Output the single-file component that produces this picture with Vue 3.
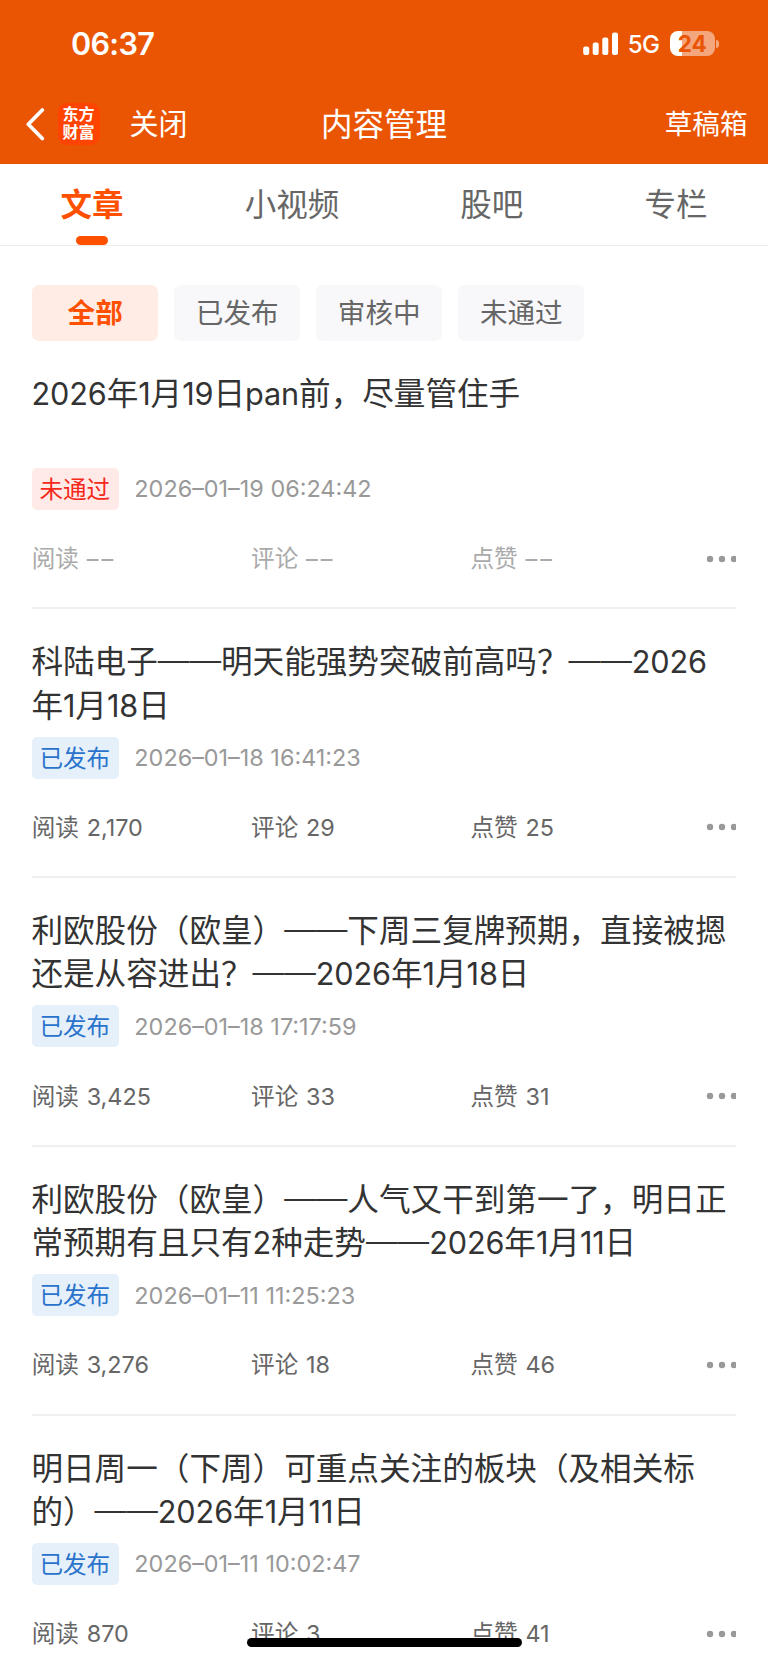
<script setup>
const tabs = ['文章', '小视频', '股吧', '专栏']
const filters = ['全部', '已发布', '审核中', '未通过']

const articles = [
  {
    lines: ['2026年1月19日pan前，尽量管住手'],
    status: '未通过', rejected: true, time: '2026–01–19 06:24:42',
    stats: ['––', '––', '––'],
  },
  {
    lines: ['科陆电子——明天能强势突破前高吗？——2026', '年1月18日'],
    status: '已发布', time: '2026–01–18 16:41:23',
    stats: ['2,170', '29', '25'],
  },
  {
    lines: ['利欧股份（欧皇）——下周三复牌预期，直接被摁', '还是从容进出？——2026年1月18日'],
    status: '已发布', time: '2026–01–18 17:17:59',
    stats: ['3,425', '33', '31'],
  },
  {
    lines: ['利欧股份（欧皇）——人气又干到第一了，明日正', '常预期有且只有2种走势——2026年1月11日'],
    status: '已发布', time: '2026–01–11 11:25:23',
    stats: ['3,276', '18', '46'],
  },
  {
    lines: ['明日周一（下周）可重点关注的板块（及相关标', '的）——2026年1月11日'],
    status: '已发布', time: '2026–01–11 10:02:47',
    stats: ['870', '3', '41'],
  },
]
const labels = ['阅读', '评论', '点赞']

// Latin letters, digits and long dashes are set in their own faces, apart from the Chinese runs.
const runs = (s) =>
  s.match(/[A-Za-z0-9]+|—+|[^A-Za-z0-9—]+/g).map((t) => ({
    t,
    latin: /^[A-Za-z0-9]/.test(t),
    dash: t[0] === '—',
  }))
</script>

<template>
  <div class="page" lang="zh-CN">
    <header class="top">
      <div class="status">
        <span class="clock">06:37</span>
        <div class="signals">
          <svg class="bars" width="36" height="24" viewBox="0 0 36 24" fill="#fff">
            <rect x="0.2" y="14.5" width="6" height="8.5" rx="2" />
            <rect x="9.7" y="10.5" width="6" height="12.5" rx="2" />
            <rect x="19.3" y="5.5" width="6" height="17.5" rx="2" />
            <rect x="29" y="0.5" width="6" height="22.5" rx="2" />
          </svg>
          <span class="net">5G</span>
          <div class="battery"><span>24</span></div>
          <i class="nub"></i>
        </div>
      </div>
      <nav class="nav">
        <div class="left">
          <svg width="20" height="34" viewBox="0 0 20 34" fill="none" stroke="#fff" stroke-width="3.7" stroke-linecap="round" stroke-linejoin="round">
            <path d="M16.3 3 2.3 17.3 16.3 31.5" />
          </svg>
          <div class="logo">东方<br>财富</div>
          <span class="close">关闭</span>
        </div>
        <h1>内容管理</h1>
        <span class="drafts">草稿箱</span>
      </nav>
    </header>

    <div class="tabs">
      <div v-for="(t, i) in tabs" :key="t" class="tab" :class="{ on: i === 0 }">{{ t }}</div>
    </div>

    <div class="filters">
      <div v-for="(f, i) in filters" :key="f" class="chip" :class="{ on: i === 0 }">{{ f }}</div>
    </div>

    <main>
      <article v-for="a in articles" :key="a.time">
        <h2>
          <span v-for="l in a.lines" :key="l" class="line"><span v-for="(r, i) in runs(l)" :key="i" :class="{ latin: r.latin, dash: r.dash }">{{ r.t }}</span></span>
        </h2>
        <div class="meta">
          <span class="tag" :class="{ bad: a.rejected }">{{ a.status }}</span>
          <time>{{ a.time }}</time>
        </div>
        <div class="stats" :class="{ dim: a.rejected }">
          <div v-for="(s, i) in a.stats" :key="i" class="stat">{{ labels[i] }}<b>{{ s }}</b></div>
          <svg class="more" width="30" height="8" viewBox="0 0 30 8" fill="#999">
            <circle cx="4" cy="4" r="3.2" /><circle cx="16" cy="4" r="3.2" /><circle cx="28" cy="4" r="3.2" />
          </svg>
        </div>
      </article>
    </main>
    <div class="home"></div>
  </div>
</template>

<style>
body { background: #fff; }
</style>

<style scoped>
.page {
  position: relative;
  width: 768px;
  height: 1662px;
  overflow: hidden;
  background: #fff;
  font-family: "Noto Sans CJK SC", sans-serif;
  text-spacing-trim: space-all;
  color: #333;
  white-space: nowrap;
}
.top { height: 163.5px; background: #ea5504; color: #fff; }
.status {
  height: 84px;
  box-sizing: border-box;
  padding: 3px 49px 0 71px;
  display: flex;
  align-items: center;
  justify-content: space-between;
  font-family: Inter, sans-serif;
}
.clock { font-size: 30.6px; font-weight: 600; letter-spacing: -0.7px; }
.signals { display: flex; align-items: center; }
.net { font-size: 24px; font-weight: 500; letter-spacing: -0.5px; margin: 1px 10px 0 9px; }
.battery {
  width: 45.5px;
  height: 25px;
  border-radius: 8px;
  background: linear-gradient(90deg, #fff 11.5px, #f4a67d 11.5px);
  color: #ea5504;
  font-size: 22.5px;
  font-weight: 700;
  line-height: 25px;
  text-align: center;
}
.nub { width: 3px; height: 8px; margin-left: 1px; border-radius: 0 4px 4px 0; background: #f4a67d; }
.nav {
  height: 79px;
  display: grid;
  grid-template-columns: 1fr auto 1fr;
  align-items: center;
  padding: 0 20.5px 0 25.5px;
}
.left { display: flex; align-items: center; margin-right: -5px; }
.logo {
  width: 42px;
  height: 42px;
  box-sizing: border-box;
  padding-top: 3px;
  margin-left: 12px;
  border-radius: 9px;
  background: #ff4400;
  text-align: center;
  font-family: "Liberation Serif", "Noto Sans CJK SC", serif;
  font-size: 16px;
  font-weight: 700;
  line-height: 18px;
}
.close { margin: -4px 0 0 30px; font-size: 29px; line-height: 40px; }
h1 { margin: -4px 0 0 -5px; font-size: 31.5px; font-weight: 400; line-height: 44px; }
.drafts { justify-self: end; margin-top: -3px; font-size: 27.6px; line-height: 40px; }

.tabs {
  height: 82px;
  box-sizing: border-box;
  border-bottom: 1.5px solid #ebebeb;
  display: flex;
  justify-content: space-around;
  font-size: 31.5px;
  line-height: 76px;
  color: #666;
}
.tab { position: relative; }
.tab.on { color: #ff5000; font-weight: 700; }
.tab.on::after {
  content: "";
  position: absolute;
  left: 50%;
  bottom: 0;
  width: 32px;
  height: 9px;
  margin-left: -16px;
  border-radius: 4.5px;
  background: #ff5000;
}
.filters { display: flex; gap: 15.75px; padding: 39.5px 32px 0; }
.chip {
  width: 126.3px;
  height: 55.5px;
  border-radius: 7px;
  background: #f8f8fa;
  color: #666;
  font-size: 27.6px;
  line-height: 53px;
  text-align: center;
}
.chip.on { background: #ffece4; color: #ff5000; font-weight: 700; }

main { padding: 0 32px; }
article { height: 268.8px; box-sizing: border-box; padding-top: 29px; border-bottom: 2px solid #f0f0f0; }
h2 { margin: 0 0 0 -0.6px; height: 86.6px; font-size: 31.6px; line-height: 43.3px; font-weight: 400; }
.line { display: block; height: 43.3px; }
.latin { font-family: Inter, sans-serif; font-size: 0.97em; letter-spacing: -0.004em; }
.dash { font-family: "Liberation Sans", sans-serif; line-height: 0; vertical-align: 2.6px; }
.meta { display: flex; align-items: center; height: 42px; margin-top: 11.7px; font-size: 23.6px; }
.tag {
  height: 42px;
  line-height: 40px;
  padding: 0 8.4px 0 7.4px;
  border-radius: 5px;
  background: #e6f0fb;
  color: #2a73cc;
}
.tag.bad { background: #ffeae8; color: #f5291b; }
time { margin-left: 15.8px; font-family: Inter, sans-serif; font-size: 23.4px; letter-spacing: 0; color: #999; }
.stats {
  display: grid;
  grid-template-columns: 219.4px 219.4px 1fr auto;
  align-items: center;
  height: 34px;
  margin-top: 31.3px;
  font-size: 23.6px;
  line-height: 34px;
  color: #666;
}
.stat { margin: -1px 0 0 -0.3px; }
.stat b { font-family: Inter, sans-serif; font-size: 23.4px; font-weight: 400; letter-spacing: 0; margin-left: 7.8px; }
.dim { color: #aaa; }
.dim .stat b { letter-spacing: 3px; }
.home { position: absolute; left: 247px; top: 1638px; width: 274.5px; height: 9px; border-radius: 4.5px; background: #000; }
</style>
